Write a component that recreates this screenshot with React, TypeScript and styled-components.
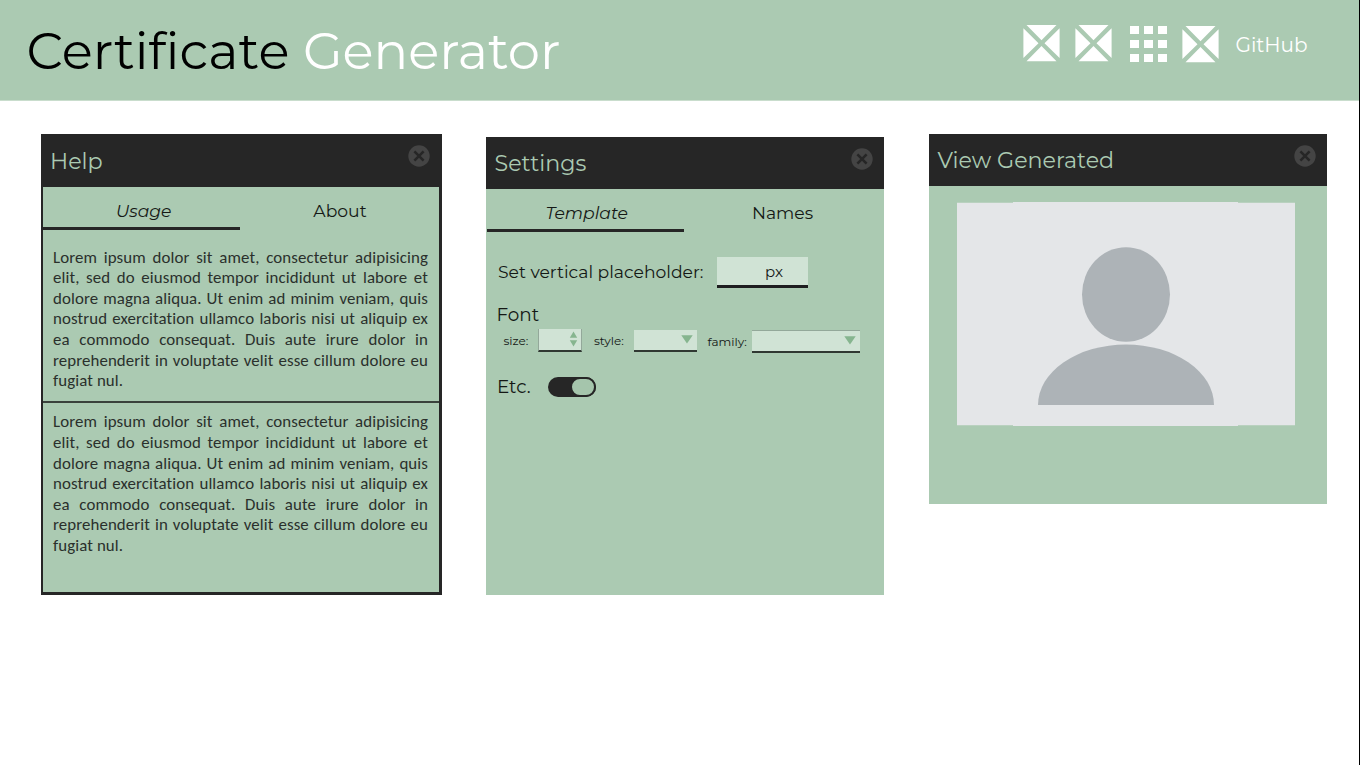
import React from "react";
import styled, { createGlobalStyle } from "styled-components";

const green = "#abcab2";
const dark = "#262626";
const pale = "#d0e3d5";

const GlobalStyle = createGlobalStyle`
  * { box-sizing: border-box; }
  body { margin: 0; background: #fff; font-family: Montserrat, Inter, sans-serif; color: #141815; }
`;

const Page = styled.div`
  width: 1360px;
  height: 765px;
  overflow: hidden;
  border-right: 1px solid #000;
  background: #fff;
`;

const Text = styled.span<{ $size: number; $color?: string; $italic?: boolean }>`
  display: block;
  white-space: nowrap;
  line-height: 1.2;
  font-size: ${(p) => p.$size}px;
  font-style: ${(p) => (p.$italic ? "italic" : "normal")};
  color: ${(p) => p.$color ?? "inherit"};
`;

const Header = styled.header`
  display: flex;
  height: 101px;
  background: ${green};
  border-bottom: 1px solid #c9ddcd;
`;

const Title = styled.h1`
  margin: 0;
  padding: 20px 0 0 26.5px;
  width: 1023px;
  font-size: 51.3px;
  font-weight: 400;
  line-height: 62px;
  color: #000;
`;

const TitleAccent = styled.span`
  color: #fff;
`;

const Nav = styled.nav`
  display: flex;
  align-items: flex-start;
  padding-top: 25px;
`;

const NavItem = styled.div<{ $gap: number; $drop?: number }>`
  display: flex;
  margin: ${(p) => p.$drop ?? 0}px ${(p) => p.$gap}px 0 0;
`;

const Grid = styled.div`
  display: grid;
  grid-template-columns: repeat(3, 9px);
  grid-auto-rows: 8px;
  gap: 6px 5px;
`;

const Cell = styled.i`
  background: #fff;
`;

const Main = styled.main`
  display: flex;
  align-items: flex-start;
  padding: 32.7px 0 0 40.5px;
`;

const Panel = styled.section<{ $width: number; $height: number; $gap?: number; $drop?: number; $framed?: boolean }>`
  display: flex;
  flex-direction: column;
  width: ${(p) => p.$width}px;
  height: ${(p) => p.$height}px;
  margin: ${(p) => p.$drop ?? 0}px ${(p) => p.$gap ?? 0}px 0 0;
  background: ${(p) => (p.$framed ? dark : green)};
`;

const PanelHead = styled.div<{ $height: number; $left: number; $right?: number }>`
  display: flex;
  flex: none;
  justify-content: space-between;
  height: ${(p) => p.$height}px;
  padding: 14px ${(p) => p.$right ?? 11}px 0 ${(p) => p.$left}px;
  background: ${dark};
`;

const CloseIcon = styled.svg`
  width: 22px;
  height: 22px;
  margin-top: -2.5px;
`;

const HelpBody = styled.div`
  flex: 1;
  margin: 0 3px 3px 2.5px;
  background: ${green};
`;

const Tabs = styled.div`
  display: grid;
  grid-template-columns: 196.5px 196px;
  height: 43px;
`;

const Tab = styled.div<{ $active?: boolean; $shift?: number }>`
  display: flex;
  justify-content: center;
  padding: 14.5px 0 0 ${(p) => p.$shift ?? 0}px;
  border-bottom: ${(p) => (p.$active ? `3px solid ${dark}` : "none")};
`;

const Paragraph = styled.div<{ $divided?: boolean }>`
  padding: ${(p) => (p.$divided ? "9.3px" : "18px")} 11px 0 10px;
  height: ${(p) => (p.$divided ? 162 : 173.5)}px;
  border-bottom: ${(p) => (p.$divided ? "none" : "2px solid #3a423c")};
  font-family: Carlito, "Noto Sans", sans-serif;
  font-variant-ligatures: none;
  letter-spacing: 0.1px;
  color: #2a302c;
`;

const Line = styled.div<{ $last?: boolean }>`
  height: 20.58px;
  line-height: 20.58px;
  font-size: 16.86px;
  white-space: nowrap;
  text-align: justify;
  text-align-last: ${(p) => (p.$last ? "left" : "justify")};
`;

const SettingsBody = styled.div`
  padding: 0 1px;
`;

const Row = styled.div<{ $top: number; $left: number; $height: number }>`
  display: flex;
  align-items: flex-start;
  height: ${(p) => p.$height}px;
  padding: ${(p) => p.$top}px 0 0 ${(p) => p.$left}px;
`;

const FieldLabel = styled.label<{ $width: number; $top?: number }>`
  flex: none;
  width: ${(p) => p.$width}px;
  padding-top: ${(p) => p.$top ?? 0}px;
`;

const Field = styled.div<{ $width: number; $height: number; $gap?: number; $drop?: number; $strong?: boolean; $edge?: "sides" | "top" }>`
  display: flex;
  flex: none;
  align-items: center;
  justify-content: flex-end;
  width: ${(p) => p.$width}px;
  height: ${(p) => p.$height}px;
  margin: ${(p) => p.$drop ?? 0}px ${(p) => p.$gap ?? 0}px 0 0;
  padding-right: ${(p) => (p.$edge === "sides" ? 3 : 4)}px;
  background: ${pale};
  border: 0 solid #93a89a;
  border-width: ${(p) => (p.$edge === "sides" ? "0 1px" : p.$edge === "top" ? "1px 0 0" : "0")};
  border-bottom: ${(p) => (p.$strong ? "3px solid #1e1e20" : "2px solid #303832")};
`;

const Unit = styled.span`
  margin: 2px 21px 0 0;
`;

const Toggle = styled.div`
  display: flex;
  justify-content: flex-end;
  width: 48px;
  height: 20px;
  margin-top: 1px;
  border-radius: 10px;
  background: ${dark};
`;

const Knob = styled.div`
  width: 26px;
  height: 20px;
  border: 2px solid ${dark};
  border-radius: 10px;
  background: #a5c5ac;
`;

const Preview = styled.div`
  padding: 16.3px 0 0 28px;
`;

const Crossed = () => (
  <svg width="37" height="37" viewBox="0 0 37 37" fill="#fff">
    <path d="M3.5 0h30L18.5 15.3zM3.5 36.3h30L18.5 21zM.4 3.2v29.9L15.5 18.2zM36.6 3.2v29.9L21.5 18.2z" />
  </svg>
);

const Close = () => (
  <CloseIcon viewBox="0 0 22 22">
    <circle cx="11" cy="11" r="10.7" fill="#444" />
    <path d="M6.4 6.4l9.2 9.2M15.6 6.4l-9.2 9.2" stroke={dark} strokeWidth="2.6" />
  </CloseIcon>
);

const Down = () => (
  <svg width="12" height="9" viewBox="0 0 12 9">
    <path d="M.3.3h11.4L6 8.6z" fill="#86b58f" />
  </svg>
);

const Spinner = () => (
  <svg width="9" height="16" viewBox="0 0 9 16">
    <path d="M.8 6.8h7.4L4.5.5zM.8 9.2h7.4l-3.7 6.3z" fill="#86b58f" />
  </svg>
);

const lines = [
  "Lorem ipsum dolor sit amet, consectetur adipisicing",
  "elit, sed do eiusmod tempor incididunt ut labore et",
  "dolore magna aliqua. Ut enim ad minim veniam, quis",
  "nostrud exercitation ullamco laboris nisi ut aliquip ex",
  "ea commodo consequat. Duis aute irure dolor in",
  "reprehenderit in voluptate velit esse cillum dolore eu",
  "fugiat nul.",
];

const Lorem = ({ divided }: { divided?: boolean }) => (
  <Paragraph $divided={divided}>
    {lines.map((line, i) => (
      <Line key={line} $last={i === lines.length - 1}>{line}</Line>
    ))}
  </Paragraph>
);

export default function App() {
  return (
    <Page>
      <GlobalStyle />
      <Header>
        <Title>
          Certificate <TitleAccent>Generator</TitleAccent>
        </Title>
        <Nav>
          <NavItem $gap={15}><Crossed /></NavItem>
          <NavItem $gap={18}><Crossed /></NavItem>
          <NavItem $gap={15} $drop={1}>
            <Grid>{Array.from({ length: 9 }, (_, i) => <Cell key={i} />)}</Grid>
          </NavItem>
          <NavItem $gap={16.5} $drop={1}><Crossed /></NavItem>
          <NavItem $gap={0} $drop={8}><Text $size={20} $color="#fff">GitHub</Text></NavItem>
        </Nav>
      </Header>
      <Main>
        <Panel $width={401.5} $height={461} $gap={44} $framed>
          <PanelHead $height={53} $left={9.5} $right={12}>
            <Text $size={22.3} $color={green}>Help</Text>
            <Close />
          </PanelHead>
          <HelpBody>
            <Tabs>
              <Tab $active $shift={5}><Text $size={17.2} $italic>Usage</Text></Tab>
              <Tab $shift={5}><Text $size={17.2}>About</Text></Tab>
            </Tabs>
            <Lorem />
            <Lorem divided />
          </HelpBody>
        </Panel>
        <Panel $width={398} $height={458} $gap={45} $drop={3}>
          <PanelHead $height={52} $left={8.5}>
            <Text $size={22.2} $color={green}>Settings</Text>
            <Close />
          </PanelHead>
          <SettingsBody>
            <Tabs>
              <Tab $active $shift={3}><Text $size={17.2} $italic>Template</Text></Tab>
              <Tab $shift={2}><Text $size={17.2}>Names</Text></Tab>
            </Tabs>
            <Row $top={25} $left={11} $height={70}>
              <FieldLabel $width={219} $top={5}><Text $size={17.2}>Set vertical placeholder:</Text></FieldLabel>
              <Field $width={91} $height={31.5} $strong><Unit><Text $size={15}>px</Text></Unit></Field>
            </Row>
            <Row $top={2.3} $left={9.5} $height={27}><Text $size={18.4}>Font</Text></Row>
            <Row $top={0} $left={16.5} $height={47}>
              <FieldLabel $width={34.5} $top={5}><Text $size={12}>size:</Text></FieldLabel>
              <Field $width={44} $height={23} $gap={12} $edge="sides"><Spinner /></Field>
              <FieldLabel $width={40} $top={5}><Text $size={12}>style:</Text></FieldLabel>
              <Field $width={63} $height={22} $drop={1} $gap={10.5}><Down /></Field>
              <FieldLabel $width={44.5} $top={6}><Text $size={12}>family:</Text></FieldLabel>
              <Field $width={108} $height={23} $drop={1} $edge="top"><Down /></Field>
            </Row>
            <Row $top={0} $left={10} $height={30}>
              <FieldLabel $width={50.5}><Text $size={18.4}>Etc.</Text></FieldLabel>
              <Toggle><Knob /></Toggle>
            </Row>
          </SettingsBody>
        </Panel>
        <Panel $width={398} $height={370}>
          <PanelHead $height={52} $left={8.5}>
            <Text $size={22.2} $color={green}>View Generated</Text>
            <Close />
          </PanelHead>
          <Preview>
            <svg width="338" height="224" viewBox="0 0 338 224">
              <path d="M0 .7h56V0h225v.7h57v222.5h-57v.8H56v-.8H0z" fill="#e4e6e8" />
              <ellipse cx="169" cy="92.5" rx="44" ry="47.3" fill="#adb3b7" />
              <path d="M81 203a88 60.5 0 0 1 176 0z" fill="#adb3b7" />
            </svg>
          </Preview>
        </Panel>
      </Main>
    </Page>
  );
}
